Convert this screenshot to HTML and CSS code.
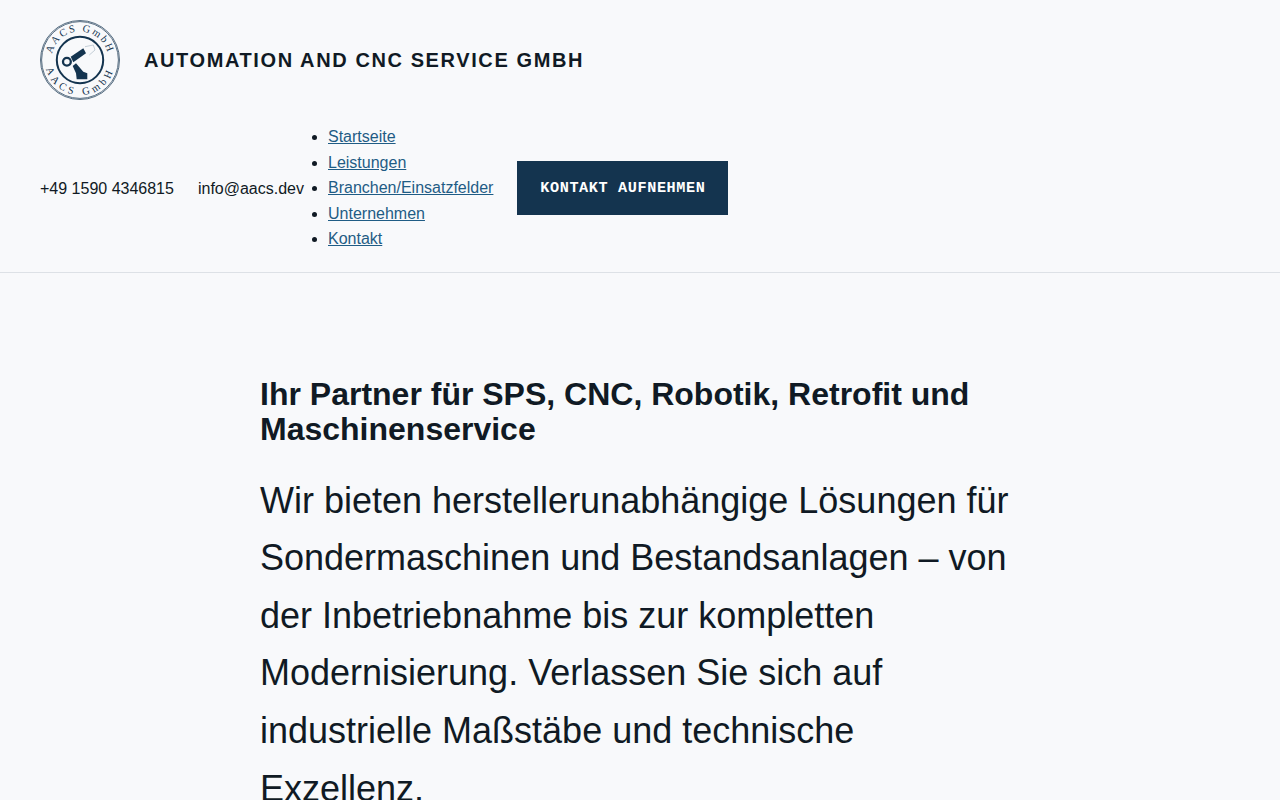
FILE: index.html
```html
<!DOCTYPE html>
<html lang="de">
<head>
<meta charset="utf-8">
<title>AACS GmbH</title>
<link rel="stylesheet" href="styles.css">
</head>
<body>
<header class="site-header">
  <div class="brand">
    <svg class="logo" viewBox="0 0 80 80" width="80" height="80" aria-label="AACS GmbH">
      <defs>
        <path id="arcTop" d="M11.5 40A28.5 28.5 0 0 1 68.5 40"/>
        <path id="arcBottom" d="M5 40A35 35 0 0 0 75 40"/>
      </defs>
      <circle cx="40" cy="40" r="39.5" class="ring-thin"/>
      <circle cx="40" cy="40" r="38.4" class="ring-thin"/>
      <circle cx="40" cy="40" r="23.2" class="ring-thick"/>
      <text class="logo-text logo-top"><textPath href="#arcTop" startOffset="50%" text-anchor="middle">AACS GmbH</textPath></text>
      <text class="logo-text logo-bottom"><textPath href="#arcBottom" startOffset="50%" text-anchor="middle">AACS GmbH</textPath></text>
      <circle cx="26.9" cy="41.7" r="3.9" class="joint"/>
      <path class="arm" d="M30.7 36.7 43.3 28.3 46 33.3 33.3 42.3z"/>
      <path class="arm" d="M32.7 46 36 43.3 43.3 51.7 47.3 53.3 47.3 59.3 36.7 59.3 36 53.3z"/>
      <path class="gripper" d="M45 26.7 53.3 25 55 30 49.3 35"/>
    </svg>
    <span class="brand-name">AUTOMATION AND CNC SERVICE GMBH</span>
  </div>
  <div class="header-meta">
    <span class="contact">+49 1590 4346815</span>
    <span class="contact">info@aacs.dev</span>
    <ul class="nav">
      <li><a href="#">Startseite</a></li>
      <li><a href="#">Leistungen</a></li>
      <li><a href="#">Branchen/Einsatzfelder</a></li>
      <li><a href="#">Unternehmen</a></li>
      <li><a href="#">Kontakt</a></li>
    </ul>
    <a class="cta" href="#">KONTAKT AUFNEHMEN</a>
  </div>
</header>
<main class="hero">
  <h1>Ihr Partner für SPS, CNC, Robotik, Retrofit und Maschinenservice</h1>
  <p>Wir bieten herstellerunabhängige Lösungen für Sondermaschinen und Bestandsanlagen – von der Inbetriebnahme bis zur kompletten Modernisierung. Verlassen Sie sich auf industrielle Maßstäbe und technische Exzellenz.</p>
</main>
</body>
</html>
```
FILE: styles.css
```css
html, body { margin: 0; padding: 0; }
body {
  background: #f8f9fb;
  color: #101a24;
  font-family: "Liberation Sans", Arial, sans-serif;
  font-size: 16px;
  line-height: 1.6;
}
.site-header {
  display: flex;
  flex-direction: column;
  gap: 24px;
  padding: 20px 40px;
  border-bottom: 1px solid #dde1e6;
}
.brand { display: flex; align-items: center; gap: 24px; }
.logo { display: block; width: 80px; height: 80px; flex: none; }
.ring-thin { fill: none; stroke: #14344f; stroke-width: 0.7; }
.ring-thick { fill: none; stroke: #14344f; stroke-width: 2; }
.logo-text { font-family: "Liberation Serif", serif; font-size: 10.5px; fill: #14344f; }
.logo-top { letter-spacing: 2px; }
.logo-bottom { letter-spacing: 3.6px; }
.joint { fill: none; stroke: #14344f; stroke-width: 2.3; }
.arm { fill: #14344f; }
.gripper { fill: none; stroke: #9fb0be; stroke-width: 0.6; }
.brand-name { font-size: 20px; font-weight: 700; letter-spacing: 1.6px; }
.header-meta { display: flex; align-items: center; gap: 24px; }
.contact { padding-top: 1px; }
.nav { margin: 0; padding: 0; }
.nav a { color: #1f5c85; }
.cta {
  background: #14344f;
  color: #fff;
  font-family: "Liberation Mono", monospace;
  font-size: 15.2px;
  font-weight: 700;
  letter-spacing: 0.04em;
  padding: 1em 1.5em;
  text-decoration: none;
}
.hero { width: 760px; margin: 0 auto; padding: 104px 0 0; }
.hero h1 { margin: 0 0 24.2px; font-size: 32px; line-height: 1.1; font-weight: 700; }
.hero p { margin: 0; font-size: 36px; line-height: 1.6; }
```
